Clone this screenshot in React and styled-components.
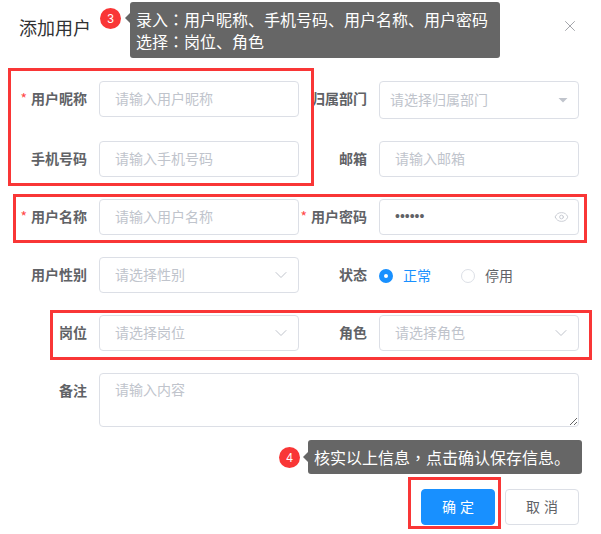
import React from 'react';
import styled, { createGlobalStyle } from 'styled-components';
import { Eye, ChevronDown, X } from 'lucide-react';

const GlobalStyle = createGlobalStyle`
  html, body {
    margin: 0;
    background: #fff;
    font-family: "Noto Sans CJK SC", "Liberation Sans", sans-serif;
  }
  *, *::before, *::after { box-sizing: border-box; }
`;

const Page = styled.div`
  position: relative;
  width: 601px;
  height: 534px;
  overflow: hidden;
  padding: 0 22px 0 19px;
`;

const Header = styled.header`
  display: flex;
  align-items: center;
  justify-content: space-between;
  height: 81px;
  padding-bottom: 27px;
`;

const Title = styled.h2`
  margin: 0;
  font-size: 18px;
  font-weight: 400;
  line-height: 24px;
  color: #303133;
`;

const CloseButton = styled.span`
  display: flex;
  color: #909399;
  margin: 0 0 3px 0;
`;

const Form = styled.form`
  display: grid;
  grid-template-columns: 280px 280px;
  row-gap: 22px;
  align-items: start;
`;

const Field = styled.div`
  display: flex;
  grid-column: ${(p) => (p.$wide ? '1 / 3' : 'auto')};
`;

const Label = styled.label`
  flex: 0 0 80px;
  padding-right: 12px;
  text-align: right;
  white-space: nowrap;
  font-size: 14px;
  font-weight: 700;
  line-height: 34px;
  color: #606266;

  ${(p) =>
    p.$required &&
    `&::before {
      content: "*";
      color: #ff4949;
      margin-right: 4px;
      font-weight: 400;
    }`}
`;

const Control = styled.div`
  position: relative;
  flex: 1;
  display: flex;
  align-items: center;
  height: ${(p) => p.$height || 36}px;
`;

const Input = styled.input`
  width: 100%;
  height: 100%;
  padding: 0 ${(p) => (p.$compact ? '30px' : '15px')} 2px ${(p) => (p.$compact ? '10px' : '15px')};
  border: 1px solid #dcdfe6;
  border-radius: 4px;
  outline: none;
  background: #fff;
  font-family: ${(p) => (p.type === 'password' ? '"Liberation Sans", sans-serif' : 'inherit')};
  font-size: 14px;
  color: #606266;

  &::placeholder {
    color: #c0c4cc;
    opacity: 1;
  }
`;

const TextArea = styled.textarea`
  display: block;
  width: 100%;
  height: 54px;
  padding: 5px 15px;
  border: 1px solid #dcdfe6;
  border-radius: 4px;
  outline: none;
  font-family: inherit;
  font-size: 14px;
  line-height: 20px;
  color: #606266;

  &::placeholder {
    color: #c0c4cc;
    opacity: 1;
  }
`;

const Suffix = styled.span`
  position: absolute;
  right: ${(p) => p.$right || 8}px;
  top: 50%;
  transform: translateY(-50%);
  display: flex;
  color: #c0c4cc;
`;

const RadioGroup = styled.div`
  display: flex;
  align-items: center;
  gap: 30px;
  height: 36px;
`;

const Radio = styled.span`
  display: flex;
  align-items: center;
  gap: 10px;
  font-size: 14px;
  line-height: 34px;
  color: ${(p) => (p.$checked ? '#1890ff' : '#606266')};

  &::before {
    content: "";
    width: 14px;
    height: 14px;
    margin-top: 2px;
    border-radius: 50%;
    background: #fff;
    border: ${(p) => (p.$checked ? '5px solid #1890ff' : '1px solid #dcdfe6')};
  }
`;

const Footer = styled.footer`
  display: flex;
  justify-content: flex-end;
  gap: 10px;
  margin-top: 62px;
`;

const Button = styled.button`
  width: 74px;
  height: 36px;
  padding: 0 0 2px 4px;
  border: 1px solid ${(p) => (p.$primary ? '#1890ff' : '#dcdfe6')};
  border-radius: 4px;
  background: ${(p) => (p.$primary ? '#1890ff' : '#fff')};
  color: ${(p) => (p.$primary ? '#fff' : '#606266')};
  font-family: inherit;
  font-size: 14px;
  letter-spacing: 4px;
`;

/* annotations drawn over the dialog */
const Highlight = styled.div`
  position: absolute;
  left: ${(p) => p.$x}px;
  top: ${(p) => p.$y}px;
  width: ${(p) => p.$w}px;
  height: ${(p) => p.$h}px;
  border: 3px solid #f93636;
  pointer-events: none;
`;

const Callout = styled.div`
  position: absolute;
  left: ${(p) => p.$x}px;
  top: ${(p) => p.$y}px;
  display: flex;
  align-items: flex-start;
  gap: ${(p) => p.$gap}px;
`;

const Badge = styled.span`
  flex: none;
  display: flex;
  align-items: center;
  justify-content: center;
  width: 21px;
  height: 21px;
  margin-top: ${(p) => p.$offset}px;
  border-radius: 50%;
  background: #f93636;
  color: #fff;
  font-family: "Liberation Sans", sans-serif;
  font-size: 12px;
`;

const Bubble = styled.div`
  position: relative;
  width: ${(p) => p.$w}px;
  height: ${(p) => p.$h}px;
  padding: ${(p) => p.$pad}px 6px 0;
  border-radius: 3px;
  background: #666;
  color: #fff;
  font-size: 16px;
  line-height: 22px;
  white-space: nowrap;

  &::before {
    content: "";
    position: absolute;
    left: -5px;
    top: ${(p) => p.$arrow}px;
    border-top: 5px solid transparent;
    border-bottom: 5px solid transparent;
    border-right: 5px solid #666;
  }
`;

/* the colon and comma sit in the middle of their cell in the reference */
const Punct = styled.span`
  font-family: "Noto Sans CJK TC", sans-serif;
`;

const thinChevron = <ChevronDown size={20} strokeWidth={1.2} />;

export default function App() {
  return (
    <>
      <GlobalStyle />
      <Page>
        <Header>
          <Title>添加用户</Title>
          <CloseButton>
            <X size={18} strokeWidth={1.1} />
          </CloseButton>
        </Header>

        <Form>
          <Field>
            <Label $required>用户昵称</Label>
            <Control>
              <Input readOnly placeholder="请输入用户昵称" />
            </Control>
          </Field>
          <Field>
            <Label>归属部门</Label>
            <Control $height={38}>
              <Input readOnly $compact placeholder="请选择归属部门" />
              <Suffix $right={10}>
                <svg width="12" height="12" viewBox="0 0 12 12">
                  <path d="M1.5 4h9L6 8.5z" fill="#c0c4cc" />
                </svg>
              </Suffix>
            </Control>
          </Field>

          <Field>
            <Label>手机号码</Label>
            <Control>
              <Input readOnly placeholder="请输入手机号码" />
            </Control>
          </Field>
          <Field>
            <Label>邮箱</Label>
            <Control>
              <Input readOnly placeholder="请输入邮箱" />
            </Control>
          </Field>

          <Field>
            <Label $required>用户名称</Label>
            <Control>
              <Input readOnly placeholder="请输入用户名称" />
            </Control>
          </Field>
          <Field>
            <Label $required>用户密码</Label>
            <Control>
              <Input readOnly type="password" value="123456" />
              <Suffix $right={10}>
                <Eye size={15} strokeWidth={1.3} />
              </Suffix>
            </Control>
          </Field>

          <Field>
            <Label>用户性别</Label>
            <Control>
              <Input readOnly placeholder="请选择性别" />
              <Suffix>{thinChevron}</Suffix>
            </Control>
          </Field>
          <Field>
            <Label>状态</Label>
            <RadioGroup>
              <Radio $checked>正常</Radio>
              <Radio>停用</Radio>
            </RadioGroup>
          </Field>

          <Field>
            <Label>岗位</Label>
            <Control>
              <Input readOnly placeholder="请选择岗位" />
              <Suffix>{thinChevron}</Suffix>
            </Control>
          </Field>
          <Field>
            <Label>角色</Label>
            <Control>
              <Input readOnly placeholder="请选择角色" />
              <Suffix>{thinChevron}</Suffix>
            </Control>
          </Field>

          <Field $wide>
            <Label>备注</Label>
            <Control $height={54}>
              <TextArea readOnly placeholder="请输入内容" />
            </Control>
          </Field>
        </Form>

        <Footer>
          <Button $primary>确定</Button>
          <Button>取消</Button>
        </Footer>

        <Highlight $x={8} $y={68} $w={306} $h={118} />
        <Highlight $x={13} $y={194} $w={574} $h={49} />
        <Highlight $x={50} $y={310} $w={542} $h={50} />
        <Highlight $x={408} $y={477} $w={93} $h={52} />

        <Callout $x={100} $y={2} $gap={9}>
          <Badge $offset={6}>3</Badge>
          <Bubble $w={370} $h={56} $pad={6} $arrow={11}>
            录入<Punct>：</Punct>用户昵称、手机号码、用户名称、用户密码
            <br />
            选择<Punct>：</Punct>岗位、角色
          </Bubble>
        </Callout>
        <Callout $x={279} $y={440} $gap={8}>
          <Badge $offset={7}>4</Badge>
          <Bubble $w={274} $h={34} $pad={6} $arrow={12}>
            核实以上信息<Punct>，</Punct>点击确认保存信息。
          </Bubble>
        </Callout>
      </Page>
    </>
  );
}
